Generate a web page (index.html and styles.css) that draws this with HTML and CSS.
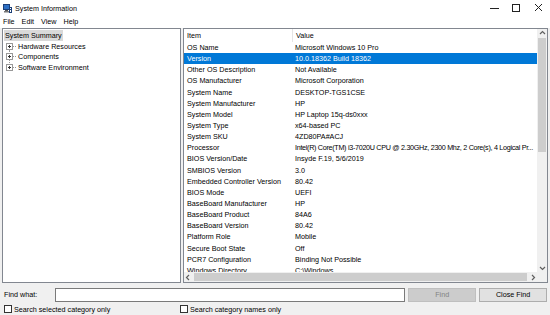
FILE: index.html
```html
<!DOCTYPE html>
<html lang="en">
<head>
  <meta charset="UTF-8">
  <title>System Information</title>
  <link rel="stylesheet" href="styles.css">
</head>
<body>
  <div class="titlebar">
    <svg class="app-icon" width="9" height="9" viewBox="0 0 9 9">
      <rect x="0.5" y="0.5" width="6" height="5" fill="#2d6fc4" stroke="#1b3f78"/>
      <rect x="2" y="6" width="3" height="1" fill="#555"/>
      <rect x="1" y="7" width="5" height="1.5" fill="#777"/>
      <rect x="6" y="3" width="3" height="6" fill="#1b3f78"/>
      <rect x="7" y="4" width="1" height="1" fill="#fff"/>
      <rect x="7" y="6" width="1" height="2" fill="#fff"/>
    </svg>
    <span class="title">System Information</span>
    <div class="controls">
      <svg width="10" height="10" viewBox="0 0 10 10"><line x1="0" y1="5.5" x2="9" y2="5.5" stroke="#222" stroke-width="1"/></svg>
      <svg width="10" height="10" viewBox="0 0 10 10"><rect x="0.5" y="1.5" width="7" height="7" fill="none" stroke="#222" stroke-width="1"/></svg>
      <svg width="10" height="10" viewBox="0 0 10 10"><path d="M1 1 L8 8 M8 1 L1 8" stroke="#222" stroke-width="1"/></svg>
    </div>
  </div>

  <div class="menubar">
    <span>File</span>
    <span>Edit</span>
    <span>View</span>
    <span>Help</span>
  </div>

  <div class="panes">
    <div class="tree">
      <div class="tree-root"><span class="selected">System Summary</span></div>
      <div class="tree-item">
        <svg width="11" height="11" viewBox="0 0 11 11">
          <path d="M3.5 7 V11" stroke="#999" stroke-dasharray="1 1"/>
          <path d="M7 5.5 H11" stroke="#999" stroke-dasharray="1 1"/>
          <rect x="0.5" y="2.5" width="6" height="6" fill="#fff" stroke="#999"/>
          <path d="M2 5.5 H5 M3.5 4 V7" stroke="#333"/>
        </svg>
        <span>Hardware Resources</span>
      </div>
      <div class="tree-item">
        <svg width="11" height="11" viewBox="0 0 11 11">
          <path d="M3.5 0 V2 M3.5 9 V11" stroke="#999" stroke-dasharray="1 1"/>
          <path d="M7 5.5 H11" stroke="#999" stroke-dasharray="1 1"/>
          <rect x="0.5" y="2.5" width="6" height="6" fill="#fff" stroke="#999"/>
          <path d="M2 5.5 H5 M3.5 4 V7" stroke="#333"/>
        </svg>
        <span>Components</span>
      </div>
      <div class="tree-item">
        <svg width="11" height="11" viewBox="0 0 11 11">
          <path d="M3.5 0 V2" stroke="#999" stroke-dasharray="1 1"/>
          <path d="M7 5.5 H11" stroke="#999" stroke-dasharray="1 1"/>
          <rect x="0.5" y="2.5" width="6" height="6" fill="#fff" stroke="#999"/>
          <path d="M2 5.5 H5 M3.5 4 V7" stroke="#333"/>
        </svg>
        <span>Software Environment</span>
      </div>
    </div>

    <div class="list">
      <div class="list-body">
        <div class="list-rows">
          <div class="row header"><span class="col-item">Item</span><span class="col-value">Value</span></div>
          <div class="row"><span class="col-item">OS Name</span><span class="col-value">Microsoft Windows 10 Pro</span></div>
          <div class="row active"><span class="col-item">Version</span><span class="col-value">10.0.18362 Build 18362</span></div>
          <div class="row"><span class="col-item">Other OS Description</span><span class="col-value">Not Available</span></div>
          <div class="row"><span class="col-item">OS Manufacturer</span><span class="col-value">Microsoft Corporation</span></div>
          <div class="row"><span class="col-item">System Name</span><span class="col-value">DESKTOP-TGS1CSE</span></div>
          <div class="row"><span class="col-item">System Manufacturer</span><span class="col-value">HP</span></div>
          <div class="row"><span class="col-item">System Model</span><span class="col-value">HP Laptop 15q-ds0xxx</span></div>
          <div class="row"><span class="col-item">System Type</span><span class="col-value">x64-based PC</span></div>
          <div class="row"><span class="col-item">System SKU</span><span class="col-value">4ZD80PA#ACJ</span></div>
          <div class="row"><span class="col-item">Processor</span><span class="col-value tight">Intel(R) Core(TM) i3-7020U CPU @ 2.30GHz, 2300 Mhz, 2 Core(s), 4 Logical Pr...</span></div>
          <div class="row"><span class="col-item">BIOS Version/Date</span><span class="col-value">Insyde F.19, 5/6/2019</span></div>
          <div class="row"><span class="col-item">SMBIOS Version</span><span class="col-value">3.0</span></div>
          <div class="row"><span class="col-item">Embedded Controller Version</span><span class="col-value">80.42</span></div>
          <div class="row"><span class="col-item">BIOS Mode</span><span class="col-value">UEFI</span></div>
          <div class="row"><span class="col-item">BaseBoard Manufacturer</span><span class="col-value">HP</span></div>
          <div class="row"><span class="col-item">BaseBoard Product</span><span class="col-value">84A6</span></div>
          <div class="row"><span class="col-item">BaseBoard Version</span><span class="col-value">80.42</span></div>
          <div class="row"><span class="col-item">Platform Role</span><span class="col-value">Mobile</span></div>
          <div class="row"><span class="col-item">Secure Boot State</span><span class="col-value">Off</span></div>
          <div class="row"><span class="col-item">PCR7 Configuration</span><span class="col-value">Binding Not Possible</span></div>
          <div class="row"><span class="col-item">Windows Directory</span><span class="col-value">C:\Windows</span></div>
        </div>
        <div class="vscroll">
          <svg class="arrow" width="9" height="8" viewBox="0 0 9 8"><path d="M2 5 L4.5 2.5 L7 5" fill="none" stroke="#606060" stroke-width="1.2"/></svg>
          <div class="vtrack"><div class="vthumb"></div></div>
          <svg class="arrow" width="9" height="8" viewBox="0 0 9 8"><path d="M2 3 L4.5 5.5 L7 3" fill="none" stroke="#606060" stroke-width="1.2"/></svg>
        </div>
      </div>
      <div class="hscroll">
        <svg class="arrow" width="8" height="9" viewBox="0 0 8 9"><path d="M5 2 L2.5 4.5 L5 7" fill="none" stroke="#606060" stroke-width="1.2"/></svg>
        <div class="htrack"><div class="hthumb"></div></div>
        <svg class="arrow" width="8" height="9" viewBox="0 0 8 9"><path d="M3 2 L5.5 4.5 L3 7" fill="none" stroke="#606060" stroke-width="1.2"/></svg>
        <div class="corner"></div>
      </div>
    </div>
  </div>

  <div class="findbar">
    <label class="find-label">Find what:</label>
    <div class="find-input"></div>
    <button class="btn disabled">Find</button>
    <button class="btn">Close Find</button>
  </div>

  <div class="options">
    <label class="check"><span class="box"></span>Search selected category only</label>
    <label class="check"><span class="box"></span>Search category names only</label>
  </div>
</body>
</html>
```

FILE: styles.css
```css
body {
  margin: 0;
  width: 550px;
  height: 315px;
  overflow: hidden;
  background-color: #f0f0f0;
  font-family: "Liberation Sans", Arial, sans-serif;
  font-size: 7.2px;
  color: #000;
}

.titlebar {
  height: 14px;
  background: #fff;
  display: flex;
  align-items: center;
  padding-left: 3px;
  padding-top: 1px;
}

.app-icon {
  margin-right: 3px;
}

.title {
  flex: 1;
}

.controls {
  display: flex;
  gap: 12px;
  padding-right: 6px;
}

.menubar {
  height: 13px;
  background: #fff;
  display: flex;
  align-items: center;
  gap: 7px;
  padding-left: 3px;
}

.panes {
  display: flex;
  gap: 2px;
  padding: 0 2px;
  height: 255px;
}

.tree {
  width: 177px;
  background: #fff;
  border: 1px solid #828790;
  padding-top: 1px;
}

.tree-root {
  height: 11px;
  display: flex;
  align-items: center;
}

.tree-root .selected {
  background: #d9d9d9;
  padding: 1px 1px;
  margin-left: 1px;
}

.tree-item {
  height: 10.5px;
  display: flex;
  align-items: center;
  padding-left: 3px;
}

.tree-item svg {
  margin-right: 1px;
}

.list {
  flex: 1;
  background: #fff;
  border: 1px solid #828790;
  display: flex;
  flex-direction: column;
  overflow: hidden;
}

.list-body {
  flex: 1;
  display: flex;
  overflow: hidden;
}

.list-rows {
  flex: 1;
  overflow: hidden;
}

.row {
  height: 11.15px;
  display: flex;
  align-items: center;
  white-space: nowrap;
}

.row.header {
  height: 13px;
}

.col-item {
  width: 105px;
  padding-left: 3px;
  flex-shrink: 0;
}

.col-value {
  padding-left: 3px;
}

.col-value.tight {
  letter-spacing: -0.3px;
}

.header .col-value {
  border-left: 1px solid #e5e5e5;
  height: 13px;
  line-height: 13px;
}

.row.active {
  background: #0078d7;
  color: #fff;
}

.vscroll {
  width: 10px;
  background: #f0f0f0;
  display: flex;
  flex-direction: column;
  align-items: center;
}

.arrow {
  flex-shrink: 0;
}

.vtrack {
  flex: 1;
  width: 100%;
  padding: 1px 1px;
  box-sizing: border-box;
}

.vthumb {
  height: 114px;
  background: #cdcdcd;
}

.hscroll {
  height: 10px;
  background: #f0f0f0;
  display: flex;
  align-items: center;
}

.htrack {
  flex: 1;
  height: 100%;
  padding: 1px 2px;
  box-sizing: border-box;
}

.hthumb {
  height: 100%;
  background: #cdcdcd;
}

.corner {
  width: 10px;
  height: 10px;
  background: #f0f0f0;
}

.findbar {
  display: flex;
  align-items: center;
  height: 17px;
  margin-top: 3px;
  padding: 0 3px 0 4px;
}

.find-label {
  width: 51px;
}

.find-input {
  width: 349px;
  height: 12px;
  background: #fff;
  border: 1px solid #7a7a7a;
}

.btn {
  font: inherit;
  height: 14px;
  margin-left: 3px;
  width: 68px;
  padding: 0;
  background: #e1e1e1;
  border: 1px solid #adadad;
  color: #000;
}

.btn.disabled {
  background: #cccccc;
  border-color: #bfbfbf;
  color: #838383;
}

.options {
  display: flex;
  align-items: center;
  height: 12px;
  padding-left: 4px;
}

.check {
  display: flex;
  align-items: center;
  width: 176px;
}

.box {
  width: 6px;
  height: 6px;
  border: 1px solid #333;
  background: #fff;
  margin-right: 2px;
}
```
